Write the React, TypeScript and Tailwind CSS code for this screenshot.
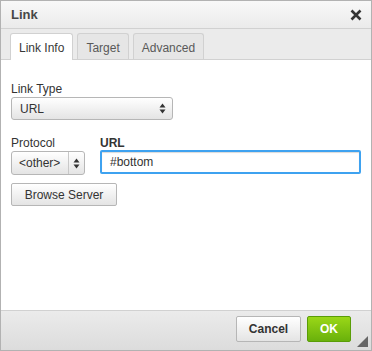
import React from 'react';

const font = { fontFamily: '"Liberation Sans", Arial, sans-serif' };

const Arrows = () => (
  <svg width="7" height="11" viewBox="0 0 7 11" className="text-[#333]">
    <path d="M3.5 0.5 L6.5 4.5 L0.5 4.5 Z" fill="currentColor" />
    <path d="M3.5 10.5 L6.5 6.5 L0.5 6.5 Z" fill="currentColor" />
  </svg>
);

const Tab = ({ label, active }: { label: string; active?: boolean }) => (
  <div
    className={`h-[26px] px-[8px] pt-[2px] flex items-center rounded-t-[3px] border border-b-0 text-[12px] ${
      active
        ? 'bg-white border-[#d1d1d1] text-[#383838] h-[27px] -mb-px'
        : 'bg-[#e6e6e6] border-[#d1d1d1] text-[#595959]'
    }`}
  >
    {label}
  </div>
);

export default function App() {
  return (
    <div style={font} className="w-[372px] h-[351px] flex flex-col border border-[#b2b2b2] bg-[#ebebeb] text-[12px] text-[#333]">
      {/* Title */}
      <div className="h-[28px] shrink-0 flex items-center justify-between pl-[10px] pr-[9px] bg-gradient-to-b from-[#f8f8f8] to-[#ebebeb] border-b border-[#d1d1d1]">
        <span className="text-[13px] font-bold text-[#474747]">Link</span>
        <svg width="12" height="12" viewBox="0 0 12 12">
          <path d="M1.5 1.5 L10.5 10.5 M10.5 1.5 L1.5 10.5" stroke="#333" strokeWidth="2.6" />
        </svg>
      </div>

      {/* Tabs */}
      <div className="h-[31px] shrink-0 flex items-end gap-[4px] pl-[9px] border-b border-[#d1d1d1] bg-[#ebebeb]">
        <Tab label="Link Info" active />
        <Tab label="Target" />
        <Tab label="Advanced" />
      </div>

      {/* Content */}
      <div className="flex-1 bg-white px-[10px] pt-[22px] flex flex-col">
        <label className="text-[#333] leading-[14px]">Link Type</label>
        <div className="mt-[1px] w-[162px] h-[23px] flex items-center justify-between pl-[8px] pr-[6px] rounded-[3px] border border-[#b6b6b6] bg-gradient-to-b from-white to-[#e4e4e4]">
          <span className="text-[#333]">URL</span>
          <Arrows />
        </div>

        <div className="mt-[16px] flex gap-[15px]">
          <div className="flex flex-col">
            <label className="leading-[14px]">Protocol</label>
            <div className="mt-[1px] w-[74px] h-[24px] flex items-center rounded-[3px] border border-[#b6b6b6] bg-gradient-to-b from-white to-[#e4e4e4]">
              <span className="pl-[7px] w-[56px] text-[#333]">&lt;other&gt;</span>
              <div className="h-full border-l border-[#c8c8c8] flex-1 flex items-center justify-center">
                <Arrows />
              </div>
            </div>
          </div>
          <div className="flex flex-col flex-1">
            <label className="font-bold leading-[14px] text-[#333]">URL</label>
            <div className="h-[24px] flex items-center pl-[8px] rounded-[2px] border-2 border-[#3ea2f0] shadow-[inset_0_1px_1px_rgba(0,0,0,0.15)] text-[#333]">
              #bottom
            </div>
          </div>
        </div>

        <div className="mt-[8px] w-[106px] h-[23px] flex items-center justify-center rounded-[2px] border border-[#b6b6b6] bg-gradient-to-b from-white to-[#e4e4e4] text-[#333]">
          Browse Server
        </div>
      </div>

      {/* Footer */}
      <div className="h-[40px] shrink-0 flex items-start justify-end gap-[6px] pt-[5px] pr-[20px] border-t border-[#d1d1d1] bg-gradient-to-b from-[#ebebeb] to-[#dcdcdc] relative">
        <div className="w-[65px] h-[26px] flex items-center justify-center rounded-[2px] border border-[#b6b6b6] bg-gradient-to-b from-white to-[#e4e4e4] font-bold text-[#333] text-[12px]">
          Cancel
        </div>
        <div className="w-[44px] h-[26px] flex items-center justify-center rounded-[2px] border border-[#5a9d07] bg-gradient-to-b from-[#9ad717] to-[#69b10b] font-bold text-white text-[12px]">
          OK
        </div>
        <svg width="11" height="11" viewBox="0 0 11 11" className="absolute right-[3px] bottom-[3px]">
          <path d="M11 0 L11 11 L0 11 Z" fill="#666" />
        </svg>
      </div>
    </div>
  );
}
